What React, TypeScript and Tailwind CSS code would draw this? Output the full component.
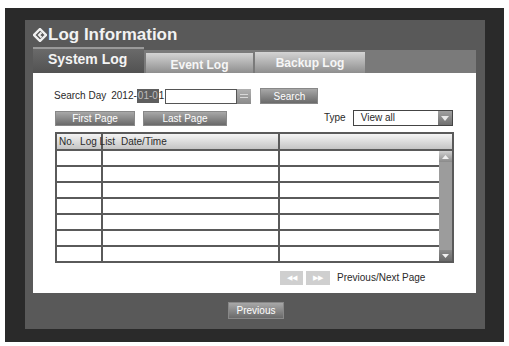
import React from "react";

const font = { fontFamily: '"Liberation Sans", Arial, sans-serif' };

function GrayBtn({ children, className }: { children: React.ReactNode; className: string }) {
  return (
    <div
      className={`flex items-center justify-center text-[10px] text-white bg-[linear-gradient(to_bottom,#a8a8a8,#6a6a6a)] border border-[#888] ${className}`}
    >
      {children}
    </div>
  );
}

export default function App() {
  const rows = Array.from({ length: 7 });
  return (
    <div className="w-[509px] h-[346px] bg-white overflow-hidden" style={font}>
      <div className="ml-[5px] mt-[8px] w-[499px] h-[334px] bg-[#2a2a2a] pl-[20px] pt-[12px]">
        <div className="w-[460px] h-[309px] bg-[#595959] pl-[8px] flex flex-col">
          {/* Title */}
          <div className="h-[27px] flex items-center pt-[2px]">
            <svg width="14" height="14" viewBox="0 0 14 14" className="mr-[1px]">
              <path d="M7 1 L13 7 L7 13 L1 7 Z" fill="none" stroke="#f0f0f0" strokeWidth="2.4" />
              <path d="M8.5 4.5 L6 7 L8.5 9.5" fill="none" stroke="#f0f0f0" strokeWidth="2" />
            </svg>
            <span className="text-[17px] font-bold text-[#f2f2f2] leading-none">Log Information</span>
          </div>
          {/* Tabs */}
          <div className="w-[443px] h-[26px] flex items-end bg-[linear-gradient(to_bottom,transparent_3px,#7a7a7a_3px)]">
            <div className="w-[111px] h-[26px] border-t-2 border-[#9a9a9a] bg-[linear-gradient(to_bottom,#6a6a6a,#525252)] flex items-start pl-[15px] pt-[3px]">
              <span className="text-[14px] font-bold text-[#f4f4f4] leading-none">System Log</span>
            </div>
            <div className="ml-[2px] w-[107px] h-[20px] bg-[linear-gradient(to_bottom,#d4d4d4,#8e8e8e)] flex items-center justify-center pt-[3px]">
              <span className="text-[12px] font-bold text-[#f6f6f6] leading-none">Event Log</span>
            </div>
            <div className="ml-[2px] w-[110px] h-[21px] bg-[linear-gradient(to_bottom,#d4d4d4,#8e8e8e)] flex items-center justify-center pt-[1px]">
              <span className="text-[12px] font-bold text-[#f6f6f6] leading-none">Backup Log</span>
            </div>
          </div>
          {/* White panel */}
          <div className="w-[443px] h-[220px] bg-white pl-[21px] pt-[15px] text-[#2a2a2a]">
            {/* Search row */}
            <div className="h-[16px] flex items-center">
              <span className="text-[10px] leading-none">Search Day</span>
              <span className="text-[10px] leading-none ml-[5px]">2012-</span>
              <span className="text-[10px] leading-none bg-[#5e5e5e] text-[#bdbdbd] h-[14px] flex items-center px-[1px]">01-0</span>
              <span className="text-[10px] leading-none">1</span>
              <div className="w-[72px] h-[15px] border border-[#555] bg-white ml-[1px]" />
              <div className="w-[14px] h-[15px] bg-[linear-gradient(to_bottom,#b0b0b0,#8a8a8a)] flex flex-col items-center justify-center">
                <div className="w-[8px] h-[1px] bg-[#d8d8d8] mb-[2px]" />
                <div className="w-[8px] h-[1px] bg-[#d8d8d8]" />
              </div>
              <GrayBtn className="ml-[9px] w-[58px] h-[16px]">Search</GrayBtn>
            </div>
            {/* Buttons row */}
            <div className="h-[16px] mt-[6px] flex items-center pl-[1px]">
              <GrayBtn className="w-[80px] h-[15px]">First Page</GrayBtn>
              <GrayBtn className="ml-[8px] w-[84px] h-[15px]">Last Page</GrayBtn>
              <span className="ml-[97px] text-[10px] leading-none">Type</span>
              <div className="ml-[7px] w-[100px] h-[16px] border border-[#444] bg-white flex items-center">
                <span className="text-[10px] leading-none pl-[7px] flex-1">View all</span>
                <div className="w-[14px] h-[14px] bg-[linear-gradient(to_bottom,#a0a0a0,#707070)] flex items-center justify-center">
                  <svg width="8" height="5" viewBox="0 0 8 5"><path d="M0 0 L8 0 L4 5 Z" fill="#e8e8e8" /></svg>
                </div>
              </div>
            </div>
            {/* Table */}
            <div className="mt-[6px] ml-[1px] w-[399px] h-[131px] border-2 border-[#5a5a5a] flex flex-col">
              <div className="h-[17px] flex bg-[linear-gradient(to_bottom,#f4f4f4,#c4c4c4)] border-b-2 border-[#5a5a5a] shrink-0">
                <div className="w-[46px] border-r-2 border-[#5a5a5a] text-[10px] leading-none flex items-center pl-[2px] whitespace-nowrap overflow-visible relative z-10">No.&nbsp;&nbsp;Log List</div>
                <div className="w-[177px] border-r-2 border-[#5a5a5a] text-[10px] leading-none flex items-center pl-[18px]">Date/Time</div>
                <div className="flex-1" />
              </div>
              <div className="flex flex-1">
                <div className="flex-1 flex flex-col">
                  {rows.map((_, i) => (
                    <div key={i} className={`flex-1 flex ${i < 6 ? "border-b-2 border-[#5a5a5a]" : ""}`}>
                      <div className="w-[46px] border-r-2 border-[#5a5a5a]" />
                      <div className="w-[177px] border-r-2 border-[#5a5a5a]" />
                      <div className="flex-1" />
                    </div>
                  ))}
                </div>
                <div className="w-[13px] bg-[#9c9c9c] flex flex-col justify-between">
                  <div className="h-[11px] bg-[linear-gradient(to_bottom,#d0d0d0,#8a8a8a)] flex items-center justify-center">
                    <svg width="7" height="4" viewBox="0 0 7 4"><path d="M0 4 L7 4 L3.5 0 Z" fill="#f0f0f0" /></svg>
                  </div>
                  <div className="h-[11px] bg-[linear-gradient(to_bottom,#8a8a8a,#6a6a6a)] flex items-center justify-center">
                    <svg width="7" height="4" viewBox="0 0 7 4"><path d="M0 0 L7 0 L3.5 4 Z" fill="#f0f0f0" /></svg>
                  </div>
                </div>
              </div>
            </div>
            {/* Prev/next */}
            <div className="mt-[7px] ml-[226px] h-[15px] flex items-center">
              <div className="w-[23px] h-[14px] bg-[#cfcfcf] flex items-center justify-center text-[7px] text-white leading-none">◀◀</div>
              <div className="ml-[3px] w-[24px] h-[14px] bg-[#cfcfcf] flex items-center justify-center text-[7px] text-white leading-none">▶▶</div>
              <span className="ml-[7px] text-[10px] leading-none">Previous/Next Page</span>
            </div>
          </div>
          {/* Previous button */}
          <div className="mt-[9px] ml-[195px]">
            <GrayBtn className="w-[56px] h-[17px]">Previous</GrayBtn>
          </div>
        </div>
      </div>
    </div>
  );
}
